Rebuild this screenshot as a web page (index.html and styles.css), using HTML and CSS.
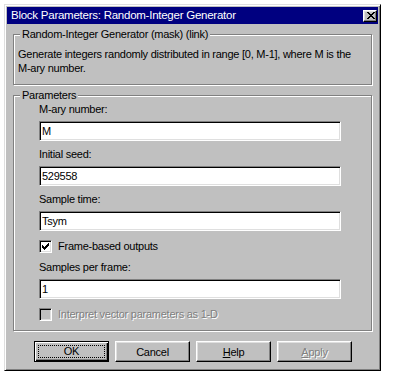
FILE: index.html
```html
<!DOCTYPE html>
<html lang="en">
<head>
    <meta charset="UTF-8">
    <title>Block Parameters: Random-Integer Generator</title>
    <link rel="stylesheet" href="styles.css">
</head>
<body>
    <div class="window">
        <div class="titlebar">
            <span class="title">Block Parameters: Random-Integer Generator</span>
            <button class="close" aria-label="Close">
                <svg width="8" height="7" viewBox="0 0 8 7" shape-rendering="crispEdges">
                    <path d="M0 0h2v1H0zM6 0h2v1H6zM1 1h2v1H1zM5 1h2v1H5zM2 2h4v1H2zM3 3h2v1H3zM2 4h4v1H2zM1 5h2v1H1zM5 5h2v1H5zM0 6h2v1H0zM6 6h2v1H6z" fill="#000"/>
                </svg>
            </button>
        </div>

        <div class="group group-desc">
            <span class="legend">Random-Integer Generator (mask) (link)</span>
            <p>Generate integers randomly distributed in range [0, M-1], where M is the<br>M-ary number.</p>
        </div>

        <div class="group group-params">
            <span class="legend">Parameters</span>

            <label class="field-label" for="mary">M-ary number:</label>
            <input class="field" type="text" id="mary" value="M">

            <label class="field-label" for="seed">Initial seed:</label>
            <input class="field" type="text" id="seed" value="529558">

            <label class="field-label" for="ts">Sample time:</label>
            <input class="field" type="text" id="ts" value="Tsym">

            <div class="check-row">
                <span class="checkbox">
                    <svg width="7" height="7" viewBox="0 0 7 7" shape-rendering="crispEdges">
                        <path d="M0 2h1v3H0zM1 3h1v3H1zM2 4h1v3H2zM3 3h1v3H3zM4 2h1v3H4zM5 1h1v3H5zM6 0h1v3H6z" fill="#000"/>
                    </svg>
                </span>
                <span>Frame-based outputs</span>
            </div>

            <label class="field-label" for="spf">Samples per frame:</label>
            <input class="field" type="text" id="spf" value="1">

            <div class="check-row disabled">
                <span class="checkbox"></span>
                <span>Interpret vector parameters as 1-D</span>
            </div>
        </div>

        <div class="buttons">
            <button class="btn default"><span class="focus">OK</span></button>
            <button class="btn">Cancel</button>
            <button class="btn"><u>H</u>elp</button>
            <button class="btn disabled"><u>A</u>pply</button>
        </div>
    </div>
</body>
</html>
```

FILE: styles.css
```css
* {
    box-sizing: border-box;
    margin: 0;
    padding: 0;
}

body {
    background-color: #fff;
    font-family: 'Liberation Sans', Arial, sans-serif;
    font-size: 11px;
    letter-spacing: -0.25px;
    color: #000;
}

.window {
    margin: 4px 0 0 4px;
    width: 377px;
    height: 367px;
    padding: 2px;
    background-color: #c0c0c0;
    border: 1px solid;
    border-color: #dfdfdf #000 #000 #dfdfdf;
    box-shadow: inset 1px 1px #fff, inset -1px -1px #808080;
}

.titlebar {
    height: 17px;
    padding: 0 1px 0 4px;
    background-color: #000080;
    color: #fff;
    display: flex;
    align-items: center;
    justify-content: space-between;
}

.title {
    font-size: 11.5px;
    line-height: 17px;
}

.close {
    width: 14px;
    height: 12px;
    display: flex;
    align-items: center;
    justify-content: center;
    background-color: #c0c0c0;
    border: 1px solid;
    border-color: #fff #000 #000 #fff;
    box-shadow: inset -1px -1px #808080, inset 1px 1px #dfdfdf;
}

.close svg {
    display: block;
    margin-left: 1px;
}

.group {
    position: relative;
    margin: 10px 6px 0;
    border: 1px solid #808080;
    box-shadow: inset 1px 1px #fff, 1px 1px #fff;
}

.legend {
    position: absolute;
    top: -7px;
    left: 6px;
    padding: 0 2px;
    line-height: 13px;
    background-color: #c0c0c0;
}

.group-desc {
    height: 51px;
    padding: 12px 4px 0;
}

.group-desc p {
    line-height: 14px;
}

.group-params {
    height: 236px;
    padding: 7px 0 0 25px;
}

.field-label {
    display: block;
    line-height: 13px;
    margin-bottom: 5px;
}

.field {
    display: block;
    width: 302px;
    height: 20px;
    margin-bottom: 7px;
    padding: 0 2px;
    font-family: inherit;
    font-size: 11px;
    letter-spacing: -0.25px;
    color: #000;
    background-color: #fff;
    border: 1px solid;
    border-color: #808080 #fff #fff #808080;
    box-shadow: inset 1px 1px #000, inset -1px -1px #dfdfdf;
    outline: none;
}

.check-row {
    display: flex;
    align-items: center;
    gap: 6px;
    height: 13px;
    line-height: 13px;
    margin: 9px 0 8px;
}

.checkbox {
    width: 13px;
    height: 13px;
    display: flex;
    align-items: center;
    justify-content: center;
    background-color: #fff;
    border: 1px solid;
    border-color: #808080 #fff #fff #808080;
    box-shadow: inset 1px 1px #000, inset -1px -1px #dfdfdf;
}

.check-row.disabled {
    margin-top: 9px;
    color: #808080;
    text-shadow: 1px 1px #fff;
}

.check-row.disabled .checkbox {
    background-color: #c0c0c0;
}

.buttons {
    display: flex;
    gap: 6px;
    margin: 10px 0 0 27px;
}

.btn {
    width: 75px;
    height: 21px;
    font-family: inherit;
    font-size: 11px;
    letter-spacing: -0.25px;
    color: #000;
    background-color: #c0c0c0;
    border: 1px solid;
    border-color: #fff #000 #000 #fff;
    box-shadow: inset -1px -1px #808080, inset 1px 1px #dfdfdf;
}

.btn.default {
    border: 1px solid #000;
    box-shadow: inset 1px 1px #fff, inset -1px -1px #000, inset -2px -2px #808080;
    padding: 3px;
}

.focus {
    display: block;
    height: 100%;
    line-height: 11px;
    border: 1px dotted #000;
}

.btn.disabled {
    color: #808080;
    text-shadow: 1px 1px #fff;
}
```
